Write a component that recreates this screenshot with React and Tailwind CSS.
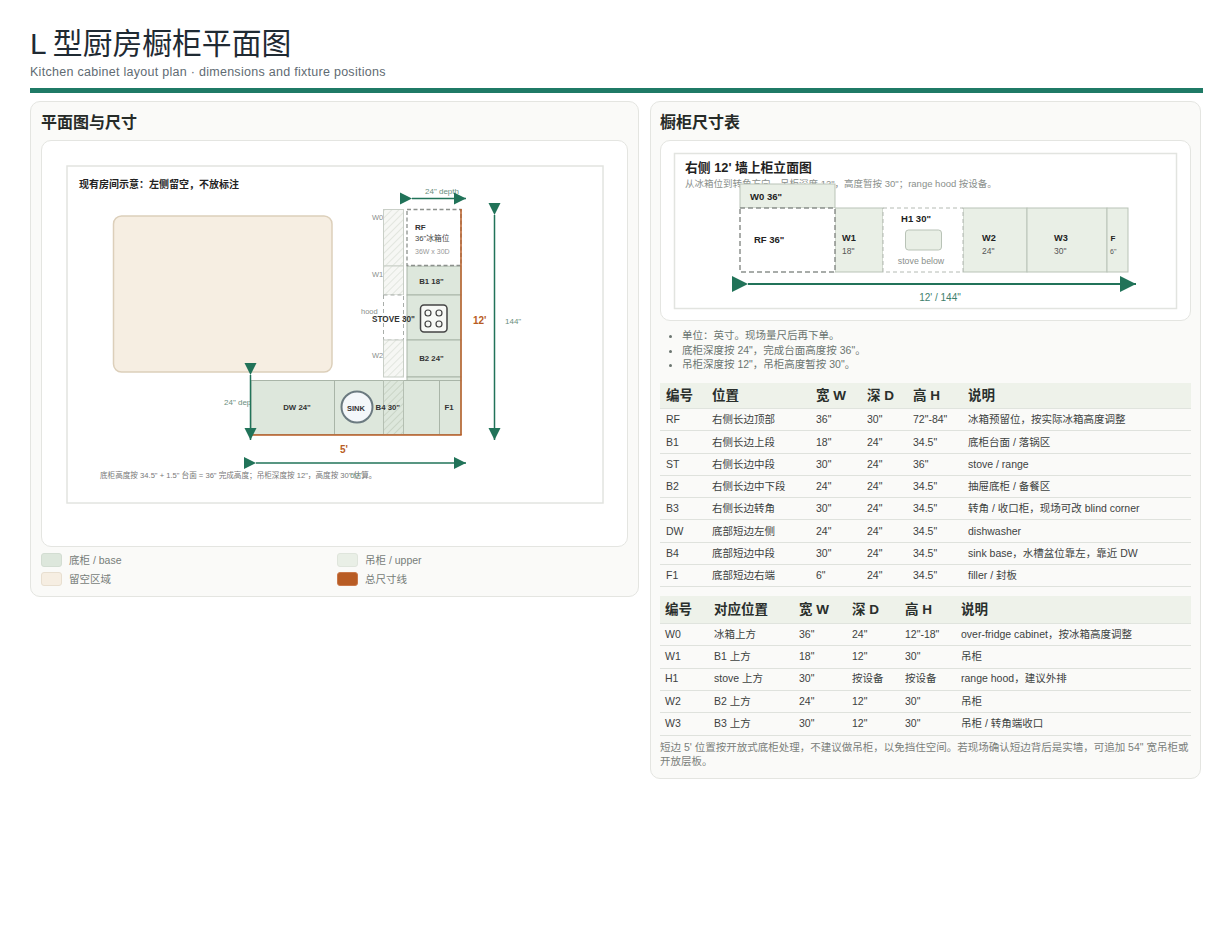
import React from 'react';

const cjk = '[font-family:"Liberation_Sans","Noto_Sans_CJK_SC",sans-serif]';
const svgFont = '"Liberation Sans","Noto Sans CJK SC",sans-serif';

const GREEN = '#217359';
const BROWN = '#b85c24';
const BASE = '#dde7dc';
const BASE_LINE = '#a9b5a8';
const UPPER = '#e9efe6';
const LABEL = '#6b9080';

const baseRows = [
    ['RF', '右侧长边顶部', '36"', '30"', '72"-84"', '冰箱预留位，按实际冰箱高度调整'],
    ['B1', '右侧长边上段', '18"', '24"', '34.5"', '底柜台面 / 落锅区'],
    ['ST', '右侧长边中段', '30"', '24"', '36"', 'stove / range'],
    ['B2', '右侧长边中下段', '24"', '24"', '34.5"', '抽屉底柜 / 备餐区'],
    ['B3', '右侧长边转角', '30"', '24"', '34.5"', '转角 / 收口柜，现场可改 blind corner'],
    ['DW', '底部短边左侧', '24"', '24"', '34.5"', 'dishwasher'],
    ['B4', '底部短边中段', '30"', '24"', '34.5"', 'sink base，水槽盆位靠左，靠近 DW'],
    ['F1', '底部短边右端', '6"', '24"', '34.5"', 'filler / 封板'],
];

const upperRows = [
    ['W0', '冰箱上方', '36"', '24"', '12"-18"', 'over-fridge cabinet，按冰箱高度调整'],
    ['W1', 'B1 上方', '18"', '12"', '30"', '吊柜'],
    ['H1', 'stove 上方', '30"', '按设备', '按设备', 'range hood，建议外排'],
    ['W2', 'B2 上方', '24"', '12"', '30"', '吊柜'],
    ['W3', 'B3 上方', '30"', '12"', '30"', '吊柜 / 转角端收口'],
];

// text helper for the drawings, coordinates are page pixels
const T = ({ x, y, size = 8, weight = 400, fill = '#333', anchor = 'start', children }) => (
    <text x={x} y={y} fontSize={size} fontWeight={weight} fill={fill} textAnchor={anchor} fontFamily={svgFont}>
        {children}
    </text>
);

const ArrowH = ({ x1, x2, y, s = 6, w = 12, sw = 1.5 }) => (
    <g fill={GREEN}>
        <line x1={x1} y1={y} x2={x2} y2={y} stroke={GREEN} strokeWidth={sw} />
        <polygon points={`${x1 - w},${y - s} ${x1},${y} ${x1 - w},${y + s}`} />
        <polygon points={`${x2 - w},${y - s} ${x2},${y} ${x2 - w},${y + s}`} />
    </g>
);

const ArrowV = ({ x, y1, y2 }) => (
    <g fill={GREEN}>
        <line x1={x} y1={y1} x2={x} y2={y2} stroke={GREEN} strokeWidth={1.5} />
        <polygon points={`${x - 6},${y1 - 12} ${x},${y1} ${x + 6},${y1 - 12}`} />
        <polygon points={`${x - 6},${y2 - 12} ${x},${y2} ${x + 6},${y2 - 12}`} />
    </g>
);

const PlanDrawing = () => (
    <svg viewBox="42 141 585 405" className="block w-full h-full">
        <defs>
            <pattern id="hatch" width="5" height="5" patternUnits="userSpaceOnUse" patternTransform="rotate(-45)">
                <rect width="5" height="5" fill="#f6f7f4" />
                <line x1="0" y1="0" x2="5" y2="0" stroke="#d5dbd2" strokeWidth="1.2" />
            </pattern>
            <pattern id="hatchDark" width="5" height="5" patternUnits="userSpaceOnUse" patternTransform="rotate(-45)">
                <line x1="0" y1="0" x2="5" y2="0" stroke="#bcc8b8" strokeWidth="1.2" />
            </pattern>
        </defs>

        <rect x="67" y="166" width="536" height="337" fill="#fff" stroke="#e2e4e0" strokeWidth="1.5" />
        <T x={79} y={187.5} size={10} weight={700} fill="#222">现有房间示意：左侧留空，不放标注</T>

        <rect x="113.5" y="216" width="218.5" height="156" rx="8" fill="#f6eee2" stroke="#dccfba" strokeWidth="1.5" />

        <T x={224} y={405} fill={LABEL}>24" depth</T>

        {/* wall cabinets */}
        <T x={372} y={219.5} size={7.5} fill="#8a8f8c">W0</T>
        <T x={372} y={277} size={7.5} fill="#8a8f8c">W1</T>
        <T x={361} y={314} size={7.5} fill="#8a8f8c">hood</T>
        <T x={372} y={358} size={7.5} fill="#8a8f8c">W2</T>
        <rect x="383.5" y="209.5" width="20" height="56.5" fill="url(#hatch)" stroke="#c9cfc7" />
        <rect x="383.5" y="266" width="20" height="29" fill="url(#hatch)" stroke="#c9cfc7" />
        <rect x="383.5" y="295" width="20" height="45" fill="#fff" stroke="#a9aeaa" strokeDasharray="4 3" />
        <rect x="383.5" y="340" width="20" height="37" fill="url(#hatch)" stroke="#c9cfc7" />

        {/* tall side */}
        <rect x="407" y="266" width="54" height="29" fill={BASE} stroke={BASE_LINE} />
        <rect x="407" y="295" width="54" height="45" fill={BASE} stroke={BASE_LINE} />
        <rect x="407" y="340" width="54" height="37" fill={BASE} stroke={BASE_LINE} />
        <rect x="407" y="377" width="54" height="4" fill={BASE} stroke={BASE_LINE} />
        <rect x="407" y="209.5" width="54" height="56" fill="#fff" stroke="#8c918d" strokeWidth="1.3" strokeDasharray="4 2.5" />

        {/* short side */}
        <rect x="251" y="380.5" width="210" height="54" fill={BASE} stroke={BASE_LINE} />
        <line x1="334.5" y1="380" x2="334.5" y2="434" stroke={BASE_LINE} />
        <line x1="439.5" y1="380" x2="439.5" y2="434" stroke={BASE_LINE} />
        <rect x="383.5" y="380.5" width="20" height="54" fill="url(#hatchDark)" stroke="#b4bfb2" />

        {/* overall lines */}
        <line x1="461" y1="209" x2="461" y2="435" stroke={BROWN} strokeWidth="1.5" />
        <line x1="251" y1="435" x2="461.7" y2="435" stroke={BROWN} strokeWidth="1.5" />

        <T x={415} y={229.5} weight={700} fill="#333">RF</T>
        <T x={415} y={240.5} size={7.7} fill="#444">36"冰箱位</T>
        <T x={415} y={253.5} size={7} fill="#999">36W x 30D</T>
        <T x={431.5} y={283.5} size={7.8} weight={700} anchor="middle" fill="#333">B1 18"</T>
        <T x={431.5} y={360.5} size={7.8} weight={700} anchor="middle" fill="#333">B2 24"</T>

        {/* stove */}
        <rect x="420.5" y="305" width="26.5" height="27" rx="3.5" fill="#f7f9f6" stroke="#444" strokeWidth="1.5" />
        <circle cx="428" cy="313" r="3" fill="none" stroke="#444" strokeWidth="1.2" />
        <circle cx="439" cy="313" r="3" fill="none" stroke="#444" strokeWidth="1.2" />
        <circle cx="428" cy="324" r="3" fill="none" stroke="#444" strokeWidth="1.2" />
        <circle cx="439" cy="324" r="3" fill="none" stroke="#444" strokeWidth="1.2" />
        <T x={372} y={321.5} size={8.2} weight={700} fill="#333">STOVE 30"</T>

        <T x={297} y={410} size={7.8} weight={700} anchor="middle" fill="#333">DW 24"</T>
        <circle cx="357" cy="407" r="15.5" fill="#f4f7fa" stroke="#6b7a80" strokeWidth="2" />
        <T x={356} y={411} size={7.5} weight={700} anchor="middle" fill="#333">SINK</T>
        <T x={375.5} y={410} size={7.8} weight={700} fill="#333">B4 30"</T>
        <T x={449} y={410} size={7.8} weight={700} anchor="middle" fill="#333">F1</T>

        <T x={425} y={193.5} size={8} fill={LABEL}>24" depth</T>
        <ArrowH x1={412} x2={466} y={198.5} />
        <ArrowV x={494.5} y1={215} y2={440} />
        <ArrowV x={250.5} y1={375} y2={440} />
        <ArrowH x1={256} x2={466} y={463} />

        <T x={473} y={324} size={10} weight={700} fill={BROWN}>12'</T>
        <T x={505} y={324} size={8} fill={LABEL}>144"</T>
        <T x={340} y={453} size={10} weight={700} fill={BROWN}>5'</T>
        <T x={100} y={478} size={7.6} fill="#777">底柜高度按 34.5" + 1.5" 台面 = 36" 完成高度；吊柜深度按 12"，高度按 30" 估算。</T>
        <T x={350} y={478} size={8} fill={LABEL}>60"</T>
    </svg>
);

const ElevationDrawing = () => (
    <svg viewBox="661 141 529 179" className="block w-full h-full">
        <rect x="674.5" y="153.5" width="502" height="155" fill="#fff" stroke="#e2e4e0" strokeWidth="1.5" />
        <T x={685} y={171.5} size={12.8} weight={700} fill="#222">右侧 12' 墙上柜立面图</T>
        <T x={685} y={187} size={9.5} fill="#8a8f8c">从冰箱位到转角方向，吊柜深度 12"，高度暂按 30"；range hood 按设备。</T>

        <rect x="740" y="184" width="95" height="24" fill={UPPER} stroke="#b9c3b7" />
        <T x={750} y={200} size={9.5} weight={700} fill="#222">W0 36"</T>

        <rect x="835" y="208" width="48" height="64" fill={UPPER} stroke="#b9c3b7" />
        <rect x="963" y="208" width="64" height="64" fill={UPPER} stroke="#b9c3b7" />
        <rect x="1027" y="208" width="80" height="64" fill={UPPER} stroke="#b9c3b7" />
        <rect x="1107" y="208" width="21" height="64" fill={UPPER} stroke="#b9c3b7" />
        <rect x="883" y="208" width="80" height="64" fill="#fff" stroke="#b4bab3" strokeDasharray="4 3" />
        <rect x="740" y="208" width="95" height="64" fill="#fff" stroke="#8c918d" strokeWidth="1.5" strokeDasharray="5 3" />

        <T x={754} y={243} size={9.5} weight={700} fill="#222">RF 36"</T>
        <T x={842} y={241} size={9.2} weight={700} fill="#222">W1</T>
        <T x={842} y={254} size={8.5} fill="#555">18"</T>
        <T x={916} y={222} size={9.5} weight={700} anchor="middle" fill="#222">H1 30"</T>
        <rect x="905.5" y="230" width="36" height="20" rx="3" fill={UPPER} stroke="#b9c3b7" />
        <T x={921} y={264} size={8.8} anchor="middle" fill="#8a8f8c">stove below</T>
        <T x={982} y={241} size={9.2} weight={700} fill="#222">W2</T>
        <T x={982} y={254} size={8.5} fill="#555">24"</T>
        <T x={1054} y={241} size={9.2} weight={700} fill="#222">W3</T>
        <T x={1054} y={254} size={8.5} fill="#555">30"</T>
        <T x={1110.5} y={241} size={8} weight={700} fill="#222">F</T>
        <T x={1110} y={254} size={7} fill="#555">6"</T>

        <ArrowH x1={748} x2={1136} y={284} s={8} w={16} sw={2} />
        <T x={940} y={301} size={10} anchor="middle" fill="#3f7f6d">12' / 144"</T>
    </svg>
);

const Swatch = ({ color, label }) => (
    <div className="flex items-center gap-[7px]">
        <span className={`w-[21px] h-[14px] rounded-[3px] border ${color}`}></span>
        <span className="text-[10.5px] leading-[14px] text-[#777d78]">{label}</span>
    </div>
);

const SpecTable = ({ head, rows, widths, headClass, rowClass, pad }) => (
    <table className="w-full table-fixed border-collapse">
        <colgroup>
            {widths.map((w, i) => (
                <col key={i} style={{ width: w }} />
            ))}
        </colgroup>
        <thead>
            <tr className="bg-[#eef2ea]">
                {head.map((h) => (
                    <th key={h} className={`${pad} ${headClass} text-left text-[13.5px] font-bold text-[#2a2f2c] border-b border-[#e0e4de]`}>
                        {h}
                    </th>
                ))}
            </tr>
        </thead>
        <tbody>
            {rows.map((row) => (
                <tr key={row[0]} className="border-b border-[#dfe2dd]">
                    {row.map((c, i) => (
                        <td key={i} className={`${pad} ${rowClass} text-[10.5px] text-[#3d423f] whitespace-nowrap`}>
                            {c}
                        </td>
                    ))}
                </tr>
            ))}
        </tbody>
    </table>
);

export default function App() {
    return (
        <div className={`min-h-[952px] bg-white pl-[30px] pr-[29px] pt-[24px] ${cjk}`}>
            {/* Header */}
            <h1 className="text-[29.8px] leading-[40px] font-normal text-[#1f2a33]">
                <span className="mr-[-2px]">L</span> 型厨房橱柜平面图
            </h1>
            <p className="text-[12.5px] leading-[16px] tracking-[0.28px] text-[#5f6b73]">
                Kitchen cabinet layout plan · dimensions and fixture positions
            </p>
            <div className="h-[5px] mt-[8px] bg-[#1f7a66]"></div>

            <div className="flex items-start gap-[11px] mt-[8px]">
                {/* Plan panel */}
                <section className="w-[609px] h-[496px] rounded-[10px] border border-[#e4e5e1] bg-[#fafaf8] px-[10px] pt-[10px]">
                    <h2 className="text-[16px] leading-[22px] font-bold text-[#262b28]">平面图与尺寸</h2>
                    <div className="h-[407px] mt-[6px] rounded-[10px] border border-[#e4e5e1] bg-white overflow-hidden">
                        <PlanDrawing />
                    </div>
                    <div className="grid grid-cols-[296px_1fr] gap-y-[5px] mt-[6px]">
                        <Swatch color="bg-[#dde7dc] border-[#d3ddd2]" label="底柜 / base" />
                        <Swatch color="bg-[#e9efe6] border-[#dfe5dc]" label="吊柜 / upper" />
                        <Swatch color="bg-[#f6eee2] border-[#e8dfd0]" label="留空区域" />
                        <Swatch color="bg-[#b85c24] border-[#c9784a]" label="总尺寸线" />
                    </div>
                </section>

                {/* Table panel */}
                <section className="w-[551px] h-[678px] rounded-[10px] border border-[#e4e5e1] bg-[#fafaf8] px-[9px] pt-[10px]">
                    <h2 className="text-[16px] leading-[22px] font-bold text-[#262b28]">橱柜尺寸表</h2>
                    <div className="h-[181px] mt-[6px] rounded-[10px] border border-[#e4e5e1] bg-white overflow-hidden">
                        <ElevationDrawing />
                    </div>
                    <ul className="list-disc pl-[22px] mt-[7px] text-[10.5px] leading-[14.5px] text-[#6b7570]">
                        <li>单位：英寸。现场量尺后再下单。</li>
                        <li>底柜深度按 24"，完成台面高度按 36"。</li>
                        <li>吊柜深度按 12"，吊柜高度暂按 30"。</li>
                    </ul>
                    <div className="mt-[11px]">
                        <SpecTable
                            head={['编号', '位置', '宽 W', '深 D', '高 H', '说明']}
                            rows={baseRows}
                            widths={['46px', '104px', '51px', '46px', '55px', 'auto']}
                            headClass="h-[26px]"
                            rowClass="h-[22.3px]"
                            pad="pl-[6px] pr-0 pt-[1px] pb-0"
                        />
                    </div>
                    <div className="mt-[9px]">
                        <SpecTable
                            head={['编号', '对应位置', '宽 W', '深 D', '高 H', '说明']}
                            rows={upperRows}
                            widths={['49px', '85px', '53px', '53px', '56px', 'auto']}
                            headClass="h-[27px]"
                            rowClass="h-[22.4px]"
                            pad="pl-[5px] pr-0 py-0"
                        />
                    </div>
                    <p className="mt-[4px] text-[10.5px] leading-[14px] text-[#7a807b]">
                        短边 5' 位置按开放式底柜处理，不建议做吊柜，以免挡住空间。若现场确认短边背后是实墙，可追加 54" 宽吊柜或开放层板。
                    </p>
                </section>
            </div>
        </div>
    );
}
